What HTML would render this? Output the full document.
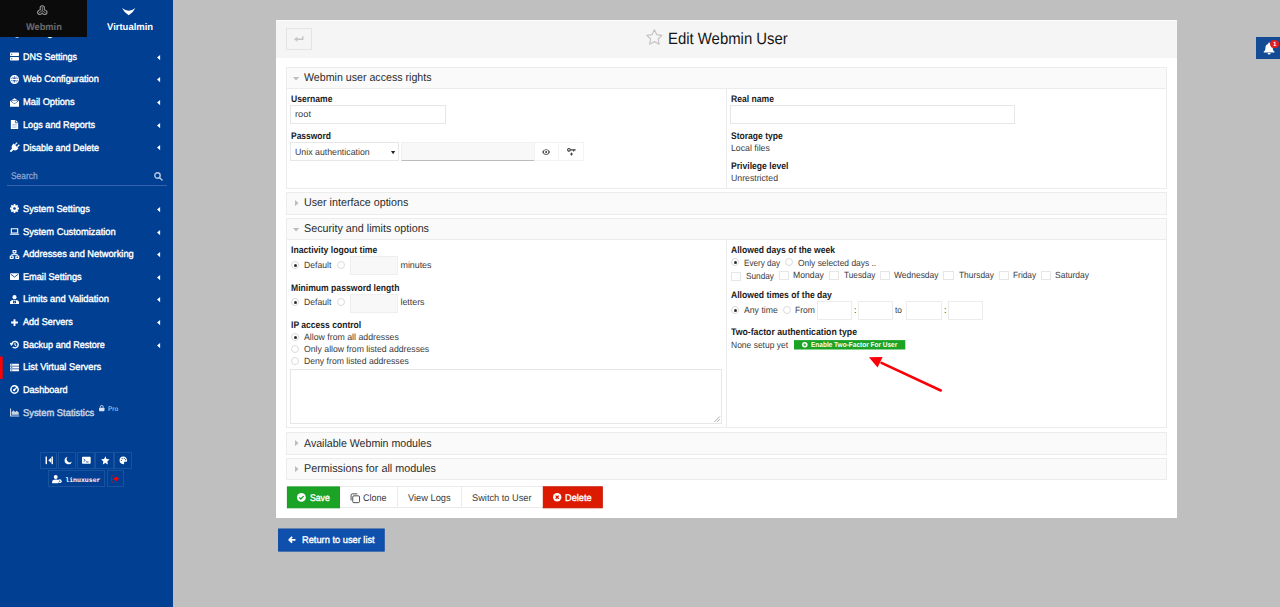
<!DOCTYPE html>
<html><head><meta charset="utf-8"><title>Edit Webmin User</title>
<style>

*{box-sizing:border-box;margin:0;padding:0}
html,body{width:1280px;height:607px;overflow:hidden}
body{background:#bfbfbf;font-family:"Liberation Sans",sans-serif;position:relative;text-rendering:geometricPrecision}
.a{position:absolute}
.t{position:absolute;white-space:nowrap;line-height:12px;transform-origin:0 50%;font-family:"Liberation Sans",sans-serif}
svg{position:absolute;overflow:visible}
.sec{position:absolute;left:286px;width:881px;border:1px solid #ececec;background:#fff}
.sh{position:absolute;left:0;top:0;right:0;background:#fafafa}
.inp{position:absolute;background:#fff;border:1px solid #e7e7e7}
.ginp{position:absolute;background:#f8f8f8;border:1px solid #eeeeee}
.rad{position:absolute;width:8px;height:8px;border-radius:50%;border:1px solid #dbdbdb;background:#fff}
.rad.on:after{content:"";position:absolute;left:1.5px;top:1.5px;width:3px;height:3px;border-radius:50%;background:#2e2e2e}
.cb{position:absolute;border:1px solid #e6e6e6;background:#fff}
.sbb{position:absolute;border:1px solid rgba(255,255,255,.095)}

</style></head><body>
<div class="a" style="left:0;top:0;width:173px;height:607px;background:#003f92"></div>
<span class="t" style="left:23.10px;top:28.000px;font-size:9.7px;color:#fff;-webkit-text-stroke:0.38px #fff;">Manage Virtual Server</span>
<svg style="left:10px;top:28.80px;" width="9" height="9" viewBox="0 0 16 16" fill="#fff"><circle cx="6" cy="6" r="6"/><circle cx="12.500" cy="11.500" r="4.200"/></svg>
<svg style="left:157.2px;top:31.20px" width="3.2" height="5.2" viewBox="0 0 3 5"><path d="M3 0 L0 2.5 L3 5Z" fill="#fff"/></svg>
<span class="t" style="left:23.10px;top:52.003px;font-size:9.7px;color:#fff;transform:scaleX(0.9268);-webkit-text-stroke:0.38px #fff;">DNS Settings</span>
<svg style="left:10px;top:52.10px;" width="9" height="9" viewBox="0 0 16 16" fill="#fff"><rect x="0" y="1" width="16" height="6" rx="1.2"/><rect x="0" y="9" width="16" height="6" rx="1.2"/><circle cx="3" cy="4" r="1.1" fill="#003f92"/><circle cx="3" cy="12" r="1.1" fill="#003f92"/></svg>
<svg style="left:157.2px;top:54.50px" width="3.2" height="5.2" viewBox="0 0 3 5"><path d="M3 0 L0 2.5 L3 5Z" fill="#fff"/></svg>
<span class="t" style="left:23.10px;top:74.000px;font-size:9.7px;color:#fff;transform:scaleX(0.9468);-webkit-text-stroke:0.38px #fff;">Web Configuration</span>
<svg style="left:10px;top:74.80px;" width="9" height="9" viewBox="0 0 16 16" fill="#fff"><circle cx="8" cy="8" r="6.800" fill="none" stroke="#fff" stroke-width="2.400"/><ellipse cx="8" cy="8" rx="3" ry="6.800" fill="none" stroke="#fff" stroke-width="1.800"/><path d="M1 8H15" stroke="#fff" stroke-width="2"/><path d="M2 4.600H14M2 11.400H14" stroke="#fff" stroke-width="1" opacity=".7"/></svg>
<svg style="left:157.2px;top:77.20px" width="3.2" height="5.2" viewBox="0 0 3 5"><path d="M3 0 L0 2.5 L3 5Z" fill="#fff"/></svg>
<span class="t" style="left:23.10px;top:97.013px;font-size:9.7px;color:#fff;transform:scaleX(0.9602);-webkit-text-stroke:0.38px #fff;">Mail Options</span>
<svg style="left:10px;top:97.50px;" width="9" height="9" viewBox="0 0 16 16" fill="#fff"><path d="M0 5.800 L8 0.300 L16 5.800 V15.500 H0Z"/><path d="M2.200 6.800 L8 10.800 L13.800 6.800 V4.600 H2.200Z" fill="#003f92"/><path d="M3.400 5.300H12.600V6.500L8 9.600 3.400 6.500Z" fill="#fff"/></svg>
<svg style="left:157.2px;top:99.90px" width="3.2" height="5.2" viewBox="0 0 3 5"><path d="M3 0 L0 2.5 L3 5Z" fill="#fff"/></svg>
<span class="t" style="left:23.10px;top:120.009px;font-size:9.7px;color:#fff;transform:scaleX(0.9414);-webkit-text-stroke:0.38px #fff;">Logs and Reports</span>
<svg style="left:10px;top:120.20px;" width="9" height="9" viewBox="0 0 16 16" fill="#fff"><path d="M1.500 0H10L14.500 4.500V16H1.500Z"/><path d="M9.600 0.300V4.900H14.200" fill="none" stroke="#003f92" stroke-width="1.300"/><path d="M4 8H12M4 10.500H12M4 13H12" stroke="#003f92" stroke-width="1" opacity=".45"/></svg>
<svg style="left:157.2px;top:122.60px" width="3.2" height="5.2" viewBox="0 0 3 5"><path d="M3 0 L0 2.5 L3 5Z" fill="#fff"/></svg>
<span class="t" style="left:23.10px;top:143.012px;font-size:9.7px;color:#fff;transform:scaleX(0.9296);-webkit-text-stroke:0.38px #fff;">Disable and Delete</span>
<svg style="left:10px;top:143.00px;" width="9" height="9" viewBox="0 0 16 16" fill="#fff"><g transform="rotate(45 8 8)"><rect x="4.200" y="-1.500" width="2.200" height="5"/><rect x="9.600" y="-1.500" width="2.200" height="5"/><path d="M2 4H14V7a6 6 0 0 1-4.300 5.600V18.500H6.300V12.600A6 6 0 0 1 2 7Z"/></g></svg>
<svg style="left:157.2px;top:145.40px" width="3.2" height="5.2" viewBox="0 0 3 5"><path d="M3 0 L0 2.5 L3 5Z" fill="#fff"/></svg>
<span class="t" style="left:23.10px;top:204.006px;font-size:9.7px;color:#fff;transform:scaleX(0.9557);-webkit-text-stroke:0.38px #fff;">System Settings</span>
<svg style="left:10px;top:204.40px;" width="9" height="9" viewBox="0 0 16 16" fill="#fff"><circle cx="8" cy="8" r="5.600"/><g stroke="#fff" stroke-width="3.200"><path d="M8 0V16M0 8H16M2.300 2.300L13.700 13.700M13.700 2.300L2.300 13.700"/></g><circle cx="8" cy="8" r="2.300" fill="#003f92"/></svg>
<svg style="left:157.2px;top:206.80px" width="3.2" height="5.2" viewBox="0 0 3 5"><path d="M3 0 L0 2.5 L3 5Z" fill="#fff"/></svg>
<span class="t" style="left:23.10px;top:227.003px;font-size:9.7px;color:#fff;transform:scaleX(0.9619);-webkit-text-stroke:0.38px #fff;">System Customization</span>
<svg style="left:10px;top:227.10px;" width="9" height="9" viewBox="0 0 16 16" fill="#fff"><path d="M2.400 3.200h11.200v7.400H2.400Z" fill="none" stroke="#fff" stroke-width="2"/><path d="M-0.500 11.800h17v.8c0 .8-.6 1.300-1.300 1.300H.8C.1 13.900-.5 13.400-.5 12.600Z"/></svg>
<svg style="left:157.2px;top:229.50px" width="3.2" height="5.2" viewBox="0 0 3 5"><path d="M3 0 L0 2.5 L3 5Z" fill="#fff"/></svg>
<span class="t" style="left:23.10px;top:249.003px;font-size:9.7px;color:#fff;transform:scaleX(0.9561);-webkit-text-stroke:0.38px #fff;">Addresses and Networking</span>
<svg style="left:10px;top:249.60px;" width="9" height="9" viewBox="0 0 16 16" fill="#fff"><rect x="4.500" y="0" width="7" height="6" rx=".8"/><rect x="-0.500" y="9.800" width="7" height="6.200" rx=".8"/><rect x="9.500" y="9.800" width="7" height="6.200" rx=".8"/><path d="M8 6V8M3 10V8H13V10" fill="none" stroke="#fff" stroke-width="1.500"/><rect x="1.600" y="11.800" width="2.800" height="2.200" fill="#003f92"/><rect x="11.600" y="11.800" width="2.800" height="2.200" fill="#003f92"/><rect x="6.600" y="1.800" width="2.800" height="2.200" fill="#003f92"/></svg>
<svg style="left:157.2px;top:252.00px" width="3.2" height="5.2" viewBox="0 0 3 5"><path d="M3 0 L0 2.5 L3 5Z" fill="#fff"/></svg>
<span class="t" style="left:23.10px;top:272.003px;font-size:9.7px;color:#fff;transform:scaleX(0.9464);-webkit-text-stroke:0.38px #fff;">Email Settings</span>
<svg style="left:10px;top:272.10px;" width="9" height="9" viewBox="0 0 16 16" fill="#fff"><rect x="0" y="2" width="16" height="12" rx="1.200"/><path d="M1.200 3.800 L8 9 L14.800 3.800" fill="none" stroke="#003f92" stroke-width="1.500"/></svg>
<svg style="left:157.2px;top:274.50px" width="3.2" height="5.2" viewBox="0 0 3 5"><path d="M3 0 L0 2.5 L3 5Z" fill="#fff"/></svg>
<span class="t" style="left:23.10px;top:294.000px;font-size:9.7px;color:#fff;transform:scaleX(0.9687);-webkit-text-stroke:0.38px #fff;">Limits and Validation</span>
<svg style="left:10px;top:294.80px;" width="9" height="9" viewBox="0 0 16 16" fill="#fff"><circle cx="8" cy="3.800" r="3.600"/><path d="M0 16v-3C0 10 3 8.300 8 8.300s8 1.700 8 4.700v3Z"/><rect x="5.400" y="10.600" width="5.200" height="4" rx=".6" fill="#003f92"/><path d="M6.500 10.600V9.400a1.500 1.500 0 0 1 3 0v1.200" fill="none" stroke="#003f92" stroke-width="1"/><rect x="7.300" y="11.800" width="1.400" height="1.600" fill="#fff"/></svg>
<svg style="left:157.2px;top:297.20px" width="3.2" height="5.2" viewBox="0 0 3 5"><path d="M3 0 L0 2.5 L3 5Z" fill="#fff"/></svg>
<span class="t" style="left:23.10px;top:317.009px;font-size:9.7px;color:#fff;transform:scaleX(0.9360);-webkit-text-stroke:0.38px #fff;">Add Servers</span>
<svg style="left:10px;top:317.70px;" width="9" height="9" viewBox="0 0 16 16" fill="#fff"><path d="M6.300 2h3.400v4.300H14v3.400H9.700V14H6.300V9.700H2V6.300h4.300Z"/></svg>
<svg style="left:157.2px;top:320.10px" width="3.2" height="5.2" viewBox="0 0 3 5"><path d="M3 0 L0 2.5 L3 5Z" fill="#fff"/></svg>
<span class="t" style="left:23.10px;top:340.009px;font-size:9.7px;color:#fff;transform:scaleX(0.9330);-webkit-text-stroke:0.38px #fff;">Backup and Restore</span>
<svg style="left:10px;top:340.20px;" width="9" height="9" viewBox="0 0 16 16" fill="#fff"><path d="M3 8.200a5.800 5.800 0 1 1 1.900 4.300" fill="none" stroke="#fff" stroke-width="2.500"/><path d="M-0.500 5 L6.300 6.300 L2 10.800Z"/><path d="M8.800 5V8.600L11 10.200" fill="none" stroke="#fff" stroke-width="1.900"/></svg>
<svg style="left:157.2px;top:342.60px" width="3.2" height="5.2" viewBox="0 0 3 5"><path d="M3 0 L0 2.5 L3 5Z" fill="#fff"/></svg>
<span class="t" style="left:23.10px;top:362.006px;font-size:9.7px;color:#fff;transform:scaleX(0.9639);-webkit-text-stroke:0.38px #fff;">List Virtual Servers</span>
<svg style="left:10px;top:362.90px;" width="9" height="9" viewBox="0 0 16 16" fill="#fff"><rect x="0" y="1.500" width="16" height="3.600" rx=".6"/><rect x="0" y="6.200" width="16" height="3.600" rx=".6"/><rect x="0" y="10.900" width="16" height="3.600" rx=".6"/><path d="M1.500 3.300H4M1.500 8H4M1.500 12.700H4" stroke="#003f92" stroke-width="1.200"/></svg>
<span class="t" style="left:23.10px;top:385.000px;font-size:9.7px;color:#fff;transform:scaleX(0.9387);-webkit-text-stroke:0.38px #fff;">Dashboard</span>
<svg style="left:10px;top:385.30px;" width="9" height="9" viewBox="0 0 16 16" fill="#fff"><circle cx="8" cy="8" r="6.500" fill="none" stroke="#fff" stroke-width="2.700"/><circle cx="7.400" cy="9" r="2.100" /><path d="M8 8.500 L12.800 3.600" stroke="#fff" stroke-width="2.300" stroke-linecap="round"/></svg>
<span class="t" style="left:23.10px;top:408.000px;font-size:9.7px;color:#fff;transform:scaleX(0.9668);opacity:.78;-webkit-text-stroke:0.38px #fff;">System Statistics</span>
<svg style="left:10px;top:408.30px;opacity:.78;" width="9" height="9" viewBox="0 0 16 16" fill="#fff"><path d="M0 1H2V13.200H16.500V15.200H0Z"/><path d="M3 12.200V7.500L6 3.800l3 3.500L12 4.800l3.500 3.200v4.200Z"/></svg>
<div class="a" style="left:0;top:0;width:86.6px;height:36.8px;background:#0b0b0b"></div>
<div class="a" style="left:86.6px;top:0;width:86.4px;height:37.6px;background:#003f92"></div>
<span class="t" style="left:25.50px;top:22.003px;font-size:9.7px;color:#6c6c6c;font-weight:bold;transform:scaleX(0.9547);">Webmin</span>
<span class="t" style="left:106.90px;top:22.009px;font-size:9.7px;color:#fff;font-weight:bold;transform:scaleX(0.9766);">Virtualmin</span>
<svg style="left:35.8px;top:4.6px" width="12.6" height="12.2" viewBox="0 0 24 24" fill="none" stroke="#959595" stroke-width="2.2"><path d="M12 11.500V3.500M12 11.500L5.500 15.500M12 11.500L18.500 15.500" stroke-width="1.600"/><path d="M8.200 9.500C6.500 3.500 9.500 1.500 12 1.500s5.500 2 3.800 8c5.700 1 6.200 4.800 5 7-1.300 2.300-4.800 3.800-8.800-.5-4 4.300-7.500 2.800-8.800.5-1.200-2.200-.7-6 5-7Z"/></svg>
<svg style="left:122.3px;top:8px" width="13.4" height="7" viewBox="0 0 13.4 7"><path d="M0 0 Q6.7 5.4 13.4 0 Q11.4 4.4 6.7 7.2 Q2 4.400 0 0Z" fill="#fff"/></svg>
<svg style="left:0;top:0" width="1280" height="607"><rect x="0" y="356.5" width="2.70" height="22.40" fill="#f00"/></svg>
<span class="t" style="left:10.60px;top:171.012px;font-size:9.6px;color:#8fa8d2;transform:scaleX(0.8748);-webkit-text-stroke:0.25px #8fa8d2;">Search</span>
<div class="a" style="left:7px;top:185px;width:159.5px;height:1px;background:#3562ab"></div>
<svg style="left:153.7px;top:171.5px" width="8.6" height="8.6" viewBox="0 0 16 16" fill="none" stroke="#b9c8e3" stroke-width="2.6"><circle cx="6.5" cy="6.5" r="5"/><path d="M10.5 10.5 L15 15" stroke-linecap="round"/></svg>
<svg style="left:99px;top:405px;opacity:.85" width="5.5" height="6.2" viewBox="0 0 14 16" fill="#fff"><rect x="0" y="7" width="14" height="9" rx="1.500"/><path d="M3.200 7V5a3.800 3.800 0 0 1 7.600 0v2" fill="none" stroke="#fff" stroke-width="2.200"/></svg>
<span class="t" style="left:107.70px;top:404.006px;font-size:6.6px;color:#d5deee;transform:scaleX(0.9741);">Pro</span>
<div class="sbb" style="left:40px;top:452px;width:17px;height:17px;"></div>
<svg style="left:44.55px;top:456.0px" width="8.7" height="8.7" viewBox="0 0 16 16" fill="#fff"><rect x="1" y="1" width="2.600" height="14"/><path d="M6 8 L11.500 3 V13Z"/><rect x="12" y="1" width="2.600" height="14"/></svg>
<div class="sbb" style="left:58px;top:452px;width:18px;height:17px;"></div>
<svg style="left:63.55px;top:456.0px" width="8.7" height="8.7" viewBox="0 0 16 16" fill="#fff"><path d="M7 1.200A7 7 0 1 0 14.800 10 5.800 5.800 0 0 1 7 1.200Z"/></svg>
<div class="sbb" style="left:77px;top:452px;width:18px;height:17px;"></div>
<svg style="left:81.95px;top:456.0px" width="8.7" height="8.7" viewBox="0 0 16 16" fill="#fff"><rect x="0" y="1.500" width="16" height="13" rx="1.500"/><path d="M3 5.500L6 8 3 10.500" fill="none" stroke="#003f92" stroke-width="1.500"/><path d="M7.500 11H12" stroke="#003f92" stroke-width="1.500"/></svg>
<div class="sbb" style="left:95px;top:452px;width:19px;height:17px;"></div>
<svg style="left:100.55px;top:456.0px" width="8.7" height="8.7" viewBox="0 0 16 16" fill="#fff"><path d="M8 0.500 L10.300 5.600 L15.800 6.200 L11.700 10 L12.800 15.500 L8 12.700 L3.200 15.500 L4.300 10 L0.200 6.200 L5.700 5.600Z"/></svg>
<div class="sbb" style="left:114px;top:452px;width:18px;height:17px;"></div>
<svg style="left:119.35px;top:456.0px" width="8.7" height="8.7" viewBox="0 0 16 16" fill="#fff"><path d="M8 1a7 7 0 1 0 0 14c1.300 0 1.800-.9 1.400-1.800-.5-1.200.2-2.400 1.600-2.400H13c1.200 0 2-1 2-2.300C15 4.300 12 1 8 1Z"/><circle cx="4.300" cy="8.300" r="1.100" fill="#003f92"/><circle cx="5.800" cy="4.800" r="1.100" fill="#003f92"/><circle cx="9.600" cy="4.200" r="1.100" fill="#003f92"/><circle cx="12.300" cy="6.800" r="1.100" fill="#003f92"/></svg>
<div class="sbb" style="left:48px;top:470px;width:57px;height:17px;"></div>
<div class="sbb" style="left:107px;top:470px;width:17px;height:17px;"></div>
<svg style="left:52.2px;top:474.8px" width="10" height="8.2" viewBox="0 0 19 16" fill="#fff"><circle cx="7" cy="4" r="3.900"/><path d="M0 16v-2.800C0 10.500 3 8.800 7 8.800c1.700 0 3.200.3 4.500.9V16Z"/><circle cx="14.800" cy="12" r="3.800"/><circle cx="14.800" cy="12" r="1.300" fill="#003f92"/></svg>
<svg style="left:111.4px;top:474.8px" width="7.8" height="7.6" viewBox="0 0 16 16" fill="#f00"><path d="M6 1.200H3C1.800 1.200 1 2 1 3.200v9.600c0 1.200.8 2 2 2h3" fill="none" stroke="#f00" stroke-width="1.500"/><path d="M4.500 5.800h5V2L16.500 8l-7 6V10.200h-5Z"/></svg>
<span class="t" style="left:65.30px;top:475.000px;font-size:6.5px;color:#fff;font-weight:bold;letter-spacing:0.011px;font-family:'Liberation Mono',monospace;">linuxuser</span>
<div class="a" style="left:276px;top:19.6px;width:901px;height:498.2px;background:#fff"></div>
<div class="a" style="left:276px;top:19.6px;width:901px;height:38.8px;background:#f5f5f5;border-top:1.5px solid #fbfbfb"></div>
<div class="a" style="left:286px;top:28px;width:26px;height:22px;border:1px solid #e4e4e4;background:#f5f5f5"></div>
<svg style="left:293.6px;top:36.2px" width="9.6" height="5.8" viewBox="0 0 9.6 5.8"><path d="M8.800 0.300V3.300H2.500" fill="none" stroke="#c4c4c4" stroke-width="1.400"/><path d="M0 3.300L3.400 0.800V5.800Z" fill="#c4c4c4"/></svg>
<svg style="left:645.5px;top:29.4px" width="16.8" height="15.8" viewBox="0 0 16 15" fill="none" stroke="#c4c4c4" stroke-width="1.100" stroke-linejoin="round"><path d="M8 0.800 L10.200 5.300 L15.200 6 L11.600 9.500 L12.500 14.400 L8 12 L3.500 14.400 L4.400 9.500 L0.800 6 L5.800 5.300Z"/></svg>
<span class="t" style="left:668.00px;top:29.003px;font-size:16.2px;color:#151515;transform:scaleX(0.9205);line-height:20px;">Edit Webmin User</span>
<svg style="left:0;top:0" width="1280" height="607"><rect x="1256" y="37" width="24.00" height="22.00" fill="#144b95"/></svg>
<svg style="left:1263px;top:41.9px" width="12.2" height="12.6" viewBox="0 0 16 16" fill="#fff"><path d="M8 0.500c.7 0 1.200.5 1.200 1.200v.5c2.300.6 3.600 2.500 3.600 5 0 2.800.8 4 2.200 5.100v1.200H1v-1.200c1.400-1.100 2.200-2.300 2.200-5.100 0-2.500 1.300-4.400 3.600-5v-.5C6.800 1 7.300.5 8 .5Z"/><path d="M6 14.300h4a2 2 0 0 1-4 0Z"/></svg>
<div class="a" style="left:1270.1px;top:39.8px;width:8.6px;height:8.6px;border-radius:50%;background:#e0201f"></div>
<span class="t" style="left:1273.00px;top:39.013px;font-size:6.2px;color:#fff;font-weight:bold;">1</span>
<div class="sec" style="top:67px;height:121.6px"><div class="sh" style="height:21px;border-bottom:1px solid #ececec"></div></div>
<span class="t" style="left:303.70px;top:71.000px;font-size:11.3px;color:#2b2b2b;transform:scaleX(0.9416);line-height:14px;">Webmin user access rights</span>
<svg style="left:292.8px;top:76.80px" width="6.2" height="3.4" viewBox="0 0 6 3.300"><path d="M0 0H6L3 3.300Z" fill="#bdbdbd"/></svg>
<div class="sec" style="top:192px;height:22.6px"><div class="sh" style="height:20.6px;"></div></div>
<span class="t" style="left:303.70px;top:196.000px;font-size:11.3px;color:#2b2b2b;transform:scaleX(0.9491);line-height:14px;">User interface options</span>
<svg style="left:294.5px;top:199.90px" width="3.5" height="6.2" viewBox="0 0 3.400 6"><path d="M0 0V6L3.400 3Z" fill="#bdbdbd"/></svg>
<div class="sec" style="top:218px;height:210.4px"><div class="sh" style="height:21px;border-bottom:1px solid #ececec"></div></div>
<span class="t" style="left:303.70px;top:222.000px;font-size:11.3px;color:#2b2b2b;transform:scaleX(0.9525);line-height:14px;">Security and limits options</span>
<svg style="left:292.8px;top:227.80px" width="6.2" height="3.4" viewBox="0 0 6 3.300"><path d="M0 0H6L3 3.300Z" fill="#bdbdbd"/></svg>
<div class="sec" style="top:432.2px;height:22.4px"><div class="sh" style="height:20.4px;"></div></div>
<span class="t" style="left:303.70px;top:437.012px;font-size:11.3px;color:#2b2b2b;transform:scaleX(0.9385);line-height:14px;">Available Webmin modules</span>
<svg style="left:294.5px;top:440.10px" width="3.5" height="6.2" viewBox="0 0 3.400 6"><path d="M0 0V6L3.400 3Z" fill="#bdbdbd"/></svg>
<div class="sec" style="top:458px;height:22.4px"><div class="sh" style="height:20.4px;"></div></div>
<span class="t" style="left:303.70px;top:462.000px;font-size:11.3px;color:#2b2b2b;transform:scaleX(0.9557);line-height:14px;">Permissions for all modules</span>
<svg style="left:294.5px;top:465.90px" width="3.5" height="6.2" viewBox="0 0 3.400 6"><path d="M0 0V6L3.400 3Z" fill="#bdbdbd"/></svg>
<div class="a" style="left:726.3px;top:88.5px;width:1px;height:99.5px;background:#ececec"></div>
<div class="a" style="left:726.3px;top:240px;width:1px;height:187.8px;background:#ececec"></div>
<span class="t" style="left:291.00px;top:94.000px;font-size:9.6px;color:#1b1b1b;font-weight:bold;transform:scaleX(0.8921);">Username</span>
<div class="inp" style="left:290px;top:105px;width:156px;height:19px;"></div>
<span class="t" style="left:295.30px;top:108.013px;font-size:8.95px;color:#3a3a3a;transform:scaleX(1.0386);">root</span>
<span class="t" style="left:291.00px;top:131.000px;font-size:9.6px;color:#1b1b1b;font-weight:bold;transform:scaleX(0.8825);">Password</span>
<div class="inp" style="left:290px;top:142px;width:109px;height:19px;"></div>
<span class="t" style="left:295.30px;top:146.003px;font-size:8.95px;color:#3a3a3a;transform:scaleX(0.9825);">Unix authentication</span>
<svg style="left:390.6px;top:150.6px" width="4.2" height="3.4" viewBox="0 0 4 3.200"><path d="M0 0H4L2 3.200Z" fill="#222"/></svg>
<div class="a" style="left:401px;top:142px;width:134px;height:19px;background:#f8f8f8;border:1px solid #f1f1f1;border-bottom:1px solid #b9bdbd"></div>
<div class="a" style="left:534px;top:142px;width:25px;height:19px;border:1px solid #f3f3f3;background:#fff"></div>
<div class="a" style="left:558px;top:142px;width:26px;height:19px;border:1px solid #f3f3f3;background:#fff"></div>
<svg style="left:542.2px;top:148.6px" width="8.2" height="5.9" viewBox="0 0 16 11.500"><path d="M0.300 5.750C2.500 1.800 5.200 0.300 8 0.300s5.500 1.500 7.700 5.450C13.500 9.700 10.800 11.200 8 11.200S2.500 9.700 0.300 5.750Z" fill="#444"/><ellipse cx="8" cy="5.750" rx="4.700" ry="3.900" fill="#fff"/><circle cx="8" cy="5.750" r="1.900" fill="#333"/></svg>
<svg style="left:566.7px;top:147.7px" width="9" height="7.8" viewBox="0 0 18 16" fill="none" stroke="#3a3a3a" stroke-width="2.200"><circle cx="3.800" cy="3.800" r="2.700"/><path d="M6.600 3.800H17.500M13.500 3.800V7"/><path d="M9 9.500V15.500M6 12.500H12" stroke-width="1.900"/></svg>
<span class="t" style="left:731.00px;top:94.000px;font-size:9.6px;color:#1b1b1b;font-weight:bold;transform:scaleX(0.8958);">Real name</span>
<div class="inp" style="left:730px;top:105px;width:285px;height:19px;"></div>
<span class="t" style="left:731.00px;top:131.000px;font-size:9.6px;color:#1b1b1b;font-weight:bold;transform:scaleX(0.8912);">Storage type</span>
<span class="t" style="left:731.00px;top:142.003px;font-size:8.95px;color:#3a3a3a;transform:scaleX(0.9761);">Local files</span>
<span class="t" style="left:731.00px;top:161.000px;font-size:9.6px;color:#1b1b1b;font-weight:bold;transform:scaleX(0.8969);">Privilege level</span>
<span class="t" style="left:731.00px;top:172.012px;font-size:8.95px;color:#3a3a3a;transform:scaleX(0.9753);">Unrestricted</span>
<span class="t" style="left:291.00px;top:245.000px;font-size:9.6px;color:#1b1b1b;font-weight:bold;transform:scaleX(0.8994);">Inactivity logout time</span>
<div class="rad on" style="left:291.20px;top:261.10px"></div>
<span class="t" style="left:303.80px;top:259.006px;font-size:8.95px;color:#3a3a3a;transform:scaleX(0.9672);">Default</span>
<div class="rad" style="left:336.70px;top:261.10px"></div>
<div class="ginp" style="left:350px;top:256px;width:48px;height:19px;"></div>
<span class="t" style="left:400.50px;top:259.006px;font-size:8.95px;color:#3a3a3a;letter-spacing:-0.050px;">minutes</span>
<span class="t" style="left:291.00px;top:283.000px;font-size:9.6px;color:#1b1b1b;font-weight:bold;transform:scaleX(0.8959);">Minimum password length</span>
<div class="rad on" style="left:291.20px;top:298.40px"></div>
<span class="t" style="left:303.80px;top:296.009px;font-size:8.95px;color:#3a3a3a;transform:scaleX(0.9672);">Default</span>
<div class="rad" style="left:336.70px;top:298.40px"></div>
<div class="ginp" style="left:350px;top:294px;width:48px;height:19px;"></div>
<span class="t" style="left:400.50px;top:296.009px;font-size:8.95px;color:#3a3a3a;letter-spacing:-0.041px;">letters</span>
<span class="t" style="left:291.00px;top:320.006px;font-size:9.6px;color:#1b1b1b;font-weight:bold;transform:scaleX(0.8914);">IP access control</span>
<div class="rad on" style="left:291.20px;top:333.10px"></div>
<span class="t" style="left:303.80px;top:331.006px;font-size:8.95px;color:#3a3a3a;transform:scaleX(0.9787);">Allow from all addresses</span>
<div class="rad" style="left:291.20px;top:344.90px"></div>
<span class="t" style="left:303.80px;top:343.009px;font-size:8.95px;color:#3a3a3a;transform:scaleX(0.9731);">Only allow from listed addresses</span>
<div class="rad" style="left:291.20px;top:356.80px"></div>
<span class="t" style="left:303.80px;top:355.003px;font-size:8.95px;color:#3a3a3a;transform:scaleX(0.9677);">Deny from listed addresses</span>
<div class="inp" style="left:290px;top:369px;width:432px;height:55px;"></div>
<svg style="left:713.5px;top:416px" width="6" height="6" viewBox="0 0 6 6" stroke="#8a8a8a" stroke-width=".7"><path d="M0.500 5.800L5.800 0.500M3.200 5.800L5.800 3.200"/></svg>
<span class="t" style="left:731.00px;top:245.000px;font-size:9.6px;color:#1b1b1b;font-weight:bold;transform:scaleX(0.8947);">Allowed days of the week</span>
<div class="rad on" style="left:731.20px;top:258.20px"></div>
<span class="t" style="left:743.80px;top:257.006px;font-size:8.95px;color:#3a3a3a;transform:scaleX(0.9107);">Every day</span>
<div class="rad" style="left:785.20px;top:258.20px"></div>
<span class="t" style="left:797.80px;top:257.006px;font-size:8.95px;color:#3a3a3a;transform:scaleX(0.9425);">Only selected days ..</span>
<div class="cb" style="left:731px;top:272px;width:10px;height:9px;"></div>
<span class="t" style="left:745.50px;top:270.012px;font-size:8.95px;color:#3a3a3a;transform:scaleX(0.9237);">Sunday</span>
<div class="cb" style="left:779px;top:271px;width:10px;height:9px;"></div>
<span class="t" style="left:792.80px;top:269.003px;font-size:8.95px;color:#3a3a3a;transform:scaleX(0.9686);">Monday</span>
<div class="cb" style="left:829px;top:271px;width:10px;height:9px;"></div>
<span class="t" style="left:843.60px;top:269.003px;font-size:8.95px;color:#3a3a3a;transform:scaleX(0.9248);">Tuesday</span>
<div class="cb" style="left:880px;top:271px;width:10px;height:9px;"></div>
<span class="t" style="left:894.30px;top:269.003px;font-size:8.95px;color:#3a3a3a;transform:scaleX(0.9459);">Wednesday</span>
<div class="cb" style="left:943px;top:271px;width:11px;height:9px;"></div>
<span class="t" style="left:958.50px;top:269.003px;font-size:8.95px;color:#3a3a3a;transform:scaleX(0.9365);">Thursday</span>
<div class="cb" style="left:999px;top:271px;width:10px;height:9px;"></div>
<span class="t" style="left:1012.70px;top:269.003px;font-size:8.95px;color:#3a3a3a;transform:scaleX(0.9338);">Friday</span>
<div class="cb" style="left:1041px;top:271px;width:10px;height:9px;"></div>
<span class="t" style="left:1055.00px;top:269.003px;font-size:8.95px;color:#3a3a3a;transform:scaleX(0.9502);">Saturday</span>
<span class="t" style="left:731.00px;top:290.012px;font-size:9.6px;color:#1b1b1b;font-weight:bold;transform:scaleX(0.8970);">Allowed times of the day</span>
<div class="rad on" style="left:731.20px;top:306.00px"></div>
<span class="t" style="left:743.80px;top:304.000px;font-size:8.95px;color:#3a3a3a;transform:scaleX(0.9718);">Any time</span>
<div class="rad" style="left:782.50px;top:306.00px"></div>
<span class="t" style="left:795.10px;top:304.000px;font-size:8.95px;color:#3a3a3a;transform:scaleX(0.9540);">From</span>
<div class="inp" style="left:817px;top:301px;width:35px;height:19px;border-color:#ececec"></div>
<div class="inp" style="left:858px;top:301px;width:35px;height:19px;border-color:#ececec"></div>
<div class="inp" style="left:906px;top:301px;width:36px;height:19px;border-color:#ececec"></div>
<div class="inp" style="left:948px;top:301px;width:35px;height:19px;border-color:#ececec"></div>
<span class="t" style="left:853.90px;top:304.006px;font-size:8.95px;color:#3a3a3a;">:</span>
<span class="t" style="left:943.90px;top:304.006px;font-size:8.95px;color:#3a3a3a;">:</span>
<span class="t" style="left:895.30px;top:304.000px;font-size:8.95px;color:#3a3a3a;transform:scaleX(0.9372);">to</span>
<span class="t" style="left:731.30px;top:327.000px;font-size:9.6px;color:#1b1b1b;font-weight:bold;transform:scaleX(0.9069);">Two-factor authentication type</span>
<span class="t" style="left:731.30px;top:339.006px;font-size:8.95px;color:#3a3a3a;transform:scaleX(0.9497);">None setup yet</span>
<svg style="left:0;top:0" width="1280" height="607"><rect x="794" y="340.1" width="111.30" height="9.40" fill="#1ba325"/></svg>
<svg style="left:801.6px;top:342px" width="5.6" height="5.6" viewBox="0 0 16 16"><circle cx="8" cy="8" r="8" fill="#fff"/><path d="M4 8H12M8 4V12" stroke="#1ba325" stroke-width="2.600"/></svg>
<span class="t" style="left:811.00px;top:339.009px;font-size:7.3px;color:#fff;font-weight:bold;transform:scaleX(0.8908);">Enable Two-Factor For User</span>
<svg style="left:0;top:0" width="1280" height="607"><path d="M881.5 362.9L940.8 390.5" stroke="#fb0007" stroke-width="2.500" stroke-linecap="round"/><path d="M868.9 357.2L882.6 357L877.6 367.6Z" fill="#fb0007"/></svg>
<svg style="left:0;top:0" width="1280" height="607"><rect x="287.4" y="486.9" width="52.20" height="20.90" fill="#1ba325" stroke="#13991e" stroke-width="1"/></svg>
<svg style="left:296.9px;top:493.1px" width="8.8" height="8.8" viewBox="0 0 16 16"><circle cx="8" cy="8" r="8" fill="#fff"/><path d="M4.200 8.300L7 11 12 5.600" fill="none" stroke="#1ba325" stroke-width="2.300"/></svg>
<span class="t" style="left:310.00px;top:493.006px;font-size:9.7px;color:#fff;transform:scaleX(0.8962);-webkit-text-stroke:0.35px #fff;">Save</span>
<div class="a" style="left:340px;top:486px;width:204px;height:22px;background:#fff;border:1px solid #ebebeb;border-left:none"></div>
<div class="a" style="left:397.2px;top:487px;width:1px;height:21px;background:#ebebeb"></div>
<div class="a" style="left:461.4px;top:487px;width:1px;height:21px;background:#ebebeb"></div>
<svg style="left:349.7px;top:492.8px" width="10.2" height="10.4" viewBox="0 0 16 16" fill="none" stroke="#3a3a3a" stroke-width="1.400"><rect x="4.300" y="4.300" width="10.700" height="10.700" rx="1.800" fill="#fff"/><path d="M1.700 11.500V3.200C1.700 2 2.400 1.200 3.600 1.200H11.500"/></svg>
<span class="t" style="left:363.40px;top:493.006px;font-size:9.7px;color:#3c3c3c;transform:scaleX(0.9284);">Clone</span>
<span class="t" style="left:408.30px;top:493.006px;font-size:9.7px;color:#3c3c3c;transform:scaleX(0.9566);">View Logs</span>
<span class="t" style="left:472.40px;top:493.006px;font-size:9.7px;color:#3c3c3c;transform:scaleX(0.9543);">Switch to User</span>
<svg style="left:0;top:0" width="1280" height="607"><rect x="543.3" y="486.8" width="59.00" height="21.00" fill="#dc1a00" stroke="#ca1500" stroke-width="1"/></svg>
<svg style="left:553px;top:493.4px" width="8.4" height="8.4" viewBox="0 0 16 16"><circle cx="8" cy="8" r="8" fill="#fff"/><path d="M5 5L11 11M11 5L5 11" stroke="#dc1a00" stroke-width="2.600"/></svg>
<span class="t" style="left:565.20px;top:493.006px;font-size:9.7px;color:#fff;transform:scaleX(0.9495);-webkit-text-stroke:0.35px #fff;">Delete</span>
<svg style="left:0;top:0" width="1280" height="607"><rect x="278.6" y="529.0" width="105.60" height="22.10" fill="#1050ad" stroke="#0d49a3" stroke-width="1"/></svg>
<svg style="left:288px;top:535.8px" width="7.8" height="7.600" viewBox="0 0 16 16" fill="none" stroke="#fff" stroke-width="3.700" stroke-linejoin="round"><path d="M8.500 1.800L2.300 8l6.200 6.200M3 8H15.500"/></svg>
<span class="t" style="left:301.80px;top:535.003px;font-size:9.7px;color:#fff;transform:scaleX(0.9576);-webkit-text-stroke:0.35px #fff;">Return to user list</span>
</body></html>
